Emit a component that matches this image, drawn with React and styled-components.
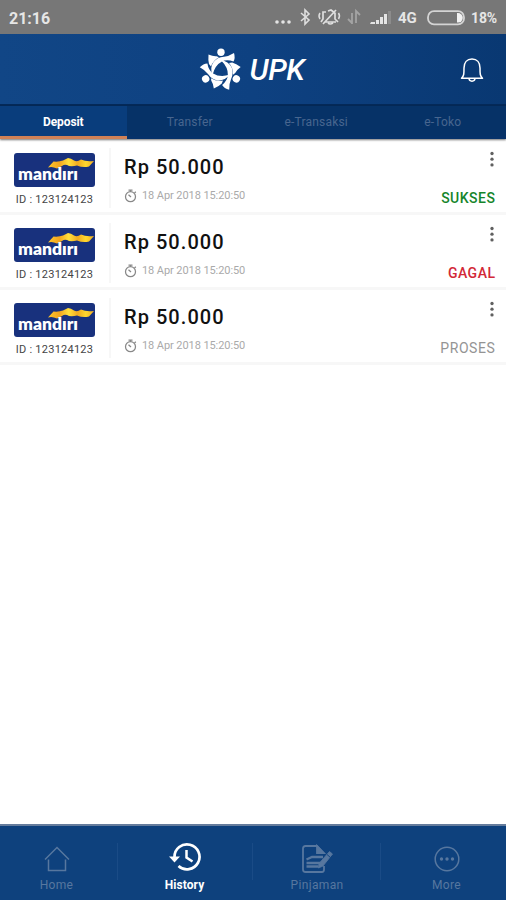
import React, { useState } from 'react'
import styled, { createGlobalStyle } from 'styled-components'

const GlobalStyle = createGlobalStyle`
  * {
    box-sizing: border-box;
  }

  body {
    margin: 0;
    background: #fff;
    font-family: Roboto, 'Liberation Sans', sans-serif;
  }

  svg {
    display: block;
    flex-shrink: 0;
  }
`

const Screen = styled.div`
  width: 506px;
  height: 900px;
  display: flex;
  flex-direction: column;
  overflow: hidden;
  background: #fff;
`

const StatusBar = styled.div`
  height: 34px;
  flex-shrink: 0;
  display: flex;
  align-items: center;
  justify-content: space-between;
  padding: 2px 8px 0 9px;
  background: #777;
  color: #e6e6e6;
  font-size: 16px;
  font-weight: 700;
`

const Clock = styled.span`
  letter-spacing: 0;
`

const StatusIcons = styled.div`
  display: flex;
  align-items: center;
`

const Network = styled.span`
  width: 21px;
  margin: 0 8px 0 3px;
  font-size: 15px;
`

const Percent = styled.span`
  width: 27px;
  margin-left: 6px;
  font-size: 14px;
  letter-spacing: -0.1px;
  white-space: nowrap;
`

const Header = styled.header`
  height: 72px;
  flex-shrink: 0;
  display: grid;
  grid-template-columns: 1fr auto 1fr;
  align-items: center;
  padding: 1px 22px 0;
  background: linear-gradient(90deg, #114686 0%, #0e4181 50%, #093872 100%);
  border-bottom: 2px solid #052a59;
`

const Brand = styled.div`
  grid-column: 2;
  display: flex;
  align-items: center;
  gap: 7px;
`

const BrandName = styled.h1`
  width: 58px;
  margin: 0;
  color: #fff;
  font-size: 30px;
  font-style: italic;
  font-weight: 500;
  line-height: 34px;
  letter-spacing: -0.4px;
`

const BellButton = styled.button`
  justify-self: end;
  padding: 0;
  border: none;
  background: none;
  cursor: pointer;
`

const Tabs = styled.div`
  height: 33px;
  flex-shrink: 0;
  display: flex;
  background: #063267;
  box-shadow: 0 1px 2px rgba(0, 0, 0, 0.55);
  z-index: 1;
`

const Tab = styled.button`
  flex: 1;
  padding: 2px 0 0;
  border: none;
  border-bottom: 3px solid ${({ $active }) => ($active ? '#d08156' : '#06326a')};
  background: ${({ $active }) => ($active ? '#093d7c' : 'transparent')};
  color: ${({ $active }) => ($active ? '#fff' : '#48668f')};
  font-family: inherit;
  font-size: 12px;
  font-weight: ${({ $active }) => ($active ? 700 : 400)};
  letter-spacing: ${({ $active }) => ($active ? '-0.1px' : '0.2px')};
  cursor: pointer;
`

const List = styled.main`
  flex: 1;
  padding-top: 1px;
`

const Row = styled.article`
  height: 75px;
  display: flex;
  padding: 0 11px 0 14px;
  border-bottom: 3px solid #f7f7f7;
`

const BankColumn = styled.div`
  width: 97px;
  margin: 8px 0 4px;
  border-right: 2px solid #f7f7f7;
`

const AccountId = styled.div`
  width: 81px;
  margin-top: 6px;
  color: #444;
  font-size: 11px;
  line-height: 14px;
  letter-spacing: 0.25px;
  text-align: center;
  white-space: nowrap;
`

const BankCard = styled.div`
  padding-top: 5px;
`

const Details = styled.div`
  flex: 1;
  padding: 13px 0 0 13px;
`

const Amount = styled.div`
  color: #111;
  font-size: 20px;
  font-weight: 500;
  line-height: 28px;
  letter-spacing: 1.05px;
`

const Timestamp = styled.div`
  display: flex;
  align-items: center;
  gap: 5px;
  margin-top: 7px;
  color: #aaa;
  font-size: 11px;
  line-height: 15px;
  letter-spacing: -0.08px;
`

const RowEnd = styled.div`
  display: flex;
  flex-direction: column;
  justify-content: space-between;
  align-items: flex-end;
  padding: 11px 0 6px;
`

const MenuButton = styled.button`
  padding: 0;
  border: none;
  background: none;
  cursor: pointer;
`

const Status = styled.span`
  color: ${({ $color }) => $color};
  font-size: 14px;
  font-weight: ${({ $pending }) => ($pending ? 400 : 500)};
  line-height: 15px;
  letter-spacing: ${({ $pending }) => ($pending ? '0.6px' : '0.5px')};
  margin-right: -0.5px;
`

const BottomNav = styled.nav`
  height: 76px;
  flex-shrink: 0;
  display: grid;
  grid-template-columns: 118px 135px 128px 125px;
  border-top: 2px solid #657c9c;
  background: #0e417d;
`

const NavItem = styled.button`
  display: flex;
  flex-direction: column;
  align-items: center;
  padding: ${({ $active }) => ($active ? '13px 0 0' : '14px 0 0')};
  padding-right: ${({ $shift }) => $shift || 0}px;
  border: none;
  background: linear-gradient(#1a4b86, #1a4b86) right 17px / 1px 37px no-repeat;
  color: ${({ $active }) => ($active ? '#fff' : '#57779f')};
  font-family: inherit;
  font-size: 12px;
  font-weight: ${({ $active }) => ($active ? 700 : 400)};
  letter-spacing: ${({ $active }) => ($active ? '0.1px' : '0.35px')};
  cursor: pointer;

  &:last-child {
    background: none;
    padding-left: 6px;
  }
`

const NavIcon = styled.span`
  height: ${({ $active }) => ($active ? 36 : 37)}px;
  display: flex;
  align-items: center;
`

const Label = styled.span`
  margin-top: ${({ $active }) => ($active ? 3 : 1)}px;
  line-height: 15px;
`

const SystemIcons = () => (
  <svg width="121" height="24" viewBox="0 0 121 24" fill="none" stroke="#dedede">
    <g fill="#e4e4e4" stroke="none">
      <circle cx="3" cy="16" r="1.8" />
      <circle cx="9" cy="16" r="1.8" />
      <circle cx="15" cy="16" r="1.8" />
    </g>
    <path d="M27 7 35 14 31 18V4L35 8 27 15" strokeWidth="1.6" />
    <path d="M52 6h-3v7l-2 3M54 5l3-1 4 3v6l3 3M51 16h11M54 17q2 2 5 0M49 18 62 4" strokeWidth="1.7" />
    <path d="M46 7q-2 3 0 6M64.500 7q2 3 0 6" strokeWidth="1.500" />
    <g stroke="#a4a4a4" strokeWidth="1.8">
      <path d="M78 18V7M78 17l-4-4M82 17V5l4 4" />
    </g>
    <g fill="#e4e4e4" stroke="none">
      <path d="M97 16h4v2h-5zM102 14h3v4h-3zM106 11h3v7h-3zM110 8h3v10h-3z" />
      <path d="M114 5h3v13h-3z" fill="#8c8c8c" />
    </g>
  </svg>
)

const Battery = () => (
  <svg width="38" height="16" viewBox="0 0 38 16">
    <rect x="1" y="1.2" width="36" height="13.2" rx="6" fill="#777" stroke="#d4d4d4" strokeWidth="1.8" />
    <path d="M30 3h1a4.8 4.8 0 0 1 0 9.6h-1z" fill="#f2f2f2" />
  </svg>
)

const BrandMark = () => (
  <svg width="44" height="44" viewBox="-22 -22 44 44" fill="#fff">
    {[0, 120, 240].map((angle) => (
      <g key={angle} transform={`rotate(${angle})`}>
        <circle cx="0" cy="-17.7" r="3.7" />
        <path d="M-12.500-15.500Q-8-13.500-4.500-13.800L-2-12.800Q-8-9.500-10-3.500L-12-6Q-13-10-12.500-15.500Z" />
        <path d="M13-17Q14.500-12 12.500-8.500 6-11 1-8.500-6-5-8.500 5-11.500-2-7.500-8-4-12.700 3-13.300 8-13.800 13-17Z" />
      </g>
    ))}
  </svg>
)

const Bell = () => (
  <svg width="24" height="26" viewBox="0 0 24 26" fill="none" stroke="#fff" strokeWidth="1.5" strokeLinejoin="round">
    <path d="M1.5 21.2C4 19 4 17 4 11c0-5.5 3-9 8-9s8 3.5 8 9c0 6 0 8 2.5 10.200Z" />
    <path d="M9 21.5c.3 3.5 5.700 3.5 6 0" />
  </svg>
)

const BankLogo = () => (
  <svg width="81" height="34" viewBox="0 0 81 34">
    <defs>
      <linearGradient id="ribbon" x1="0" x2="1">
        <stop offset="0" stopColor="#ffc72c" />
        <stop offset="0.25" stopColor="#f3a51d" />
        <stop offset="0.45" stopColor="#ffe03c" />
        <stop offset="0.65" stopColor="#f0aa20" />
        <stop offset="0.82" stopColor="#ffd72e" />
        <stop offset="1" stopColor="#f2ae22" />
      </linearGradient>
    </defs>
    <rect width="81" height="34" rx="3" fill="#18317d" />
    <path d="M34 14.500 39.500 8.500Q45 9 49 7.500L54 5Q57 5 60 7.500 63 9.500 67 6.500 72 9 80 8L75 13.500Q69 15 63 12.500 59 13.500 55 13 51 10.500 48 13L43 15.500Q38 13 34 14.500Z" fill="url(#ribbon)" />
    <text
      x="4"
      y="27"
      fill="#fff"
      fontFamily="Lato, sans-serif"
      fontSize="17"
      fontWeight="800"
      textLength="60"
      lengthAdjust="spacingAndGlyphs"
    >
      mandırı
    </text>
  </svg>
)

const Stopwatch = () => (
  <svg width="13" height="14" viewBox="0 0 13 14" fill="none" stroke="#888" strokeWidth="1.25">
    <circle cx="6.5" cy="7.7" r="5" />
    <path d="M4.5 1h4M6.5 1v2M10.5 4l1.300-1.300M4.5 5.700 7 8" />
  </svg>
)

const Dots = () => (
  <svg width="6" height="16" viewBox="0 0 6 16" fill="#606060">
    <circle cx="3" cy="2.5" r="1.65" />
    <circle cx="3" cy="8.2" r="1.65" />
    <circle cx="3" cy="13.9" r="1.65" />
  </svg>
)

const HomeIcon = () => (
  <svg width="26" height="26" viewBox="0 0 26 26" fill="none" stroke="currentColor" strokeWidth="1.5">
    <path d="M1 13.5 13 1.5l12 12M4.5 13.5v11h17v-11" />
  </svg>
)

const HistoryIcon = () => (
  <svg width="34" height="30" viewBox="0 0 34 30" fill="none" stroke="currentColor" strokeWidth="2.7">
    <path d="M6.5 15A12.5 12.5 0 1 1 10.5 24" />
    <path d="M1 14.5h11l-5.5 6z" fill="currentColor" stroke="none" />
    <path d="M18.5 8v7.5l6 4" strokeWidth="2.5" />
  </svg>
)

const LoanIcon = () => (
  <svg width="32" height="30" viewBox="0 0 32 30" fill="none" stroke="currentColor" strokeWidth="1.8">
    <path d="M23 9.5 16 2H4.5Q2 2 2 4.5v21Q2 28 4.5 28H21q2 0 2-2.5V22" />
    <path d="M16 2v7h7z" fill="currentColor" />
    <path d="M5.5 15.5 11 13h11M5.5 19h14M5.5 22.5h12" strokeWidth="2.3" />
    <path d="m28.5 7.5 3 2.5L22 22l-4.5 2 .5-4.5z" fill="currentColor" strokeWidth="0.8" />
    <path d="m26 10.5 3.5 3" stroke="#0e417d" strokeWidth="0.9" />
  </svg>
)

const MoreIcon = () => (
  <svg width="26" height="26" viewBox="0 0 26 26" fill="currentColor">
    <circle cx="13" cy="13" r="11.8" fill="none" stroke="currentColor" strokeWidth="1.5" />
    <circle cx="7.5" cy="13" r="1.7" />
    <circle cx="13" cy="13" r="1.7" />
    <circle cx="18.5" cy="13" r="1.7" />
  </svg>
)

const tabs = ['Deposit', 'Transfer', 'e-Transaksi', 'e-Toko']

const transactions = [
  { status: 'SUKSES', color: '#16852b' },
  { status: 'GAGAL', color: '#d22837' },
  { status: 'PROSES', color: '#949494' },
]

const navItems = [
  { label: 'Home', icon: <HomeIcon />, shift: 5 },
  { label: 'History', icon: <HistoryIcon />, shift: 2 },
  { label: 'Pinjaman', icon: <LoanIcon /> },
  { label: 'More', icon: <MoreIcon /> },
]

const App = () => {
  const [activeTab, setActiveTab] = useState('Deposit')
  const [activePage, setActivePage] = useState('History')

  return (
    <>
      <GlobalStyle />
      <Screen>
        <StatusBar>
          <Clock>21:16</Clock>
          <StatusIcons>
            <SystemIcons />
            <Network>4G</Network>
            <Battery />
            <Percent>18%</Percent>
          </StatusIcons>
        </StatusBar>
        <Header>
          <Brand>
            <BrandMark />
            <BrandName>UPK</BrandName>
          </Brand>
          <BellButton aria-label="Notifications">
            <Bell />
          </BellButton>
        </Header>
        <Tabs>
          {tabs.map((tab) => (
            <Tab key={tab} $active={activeTab === tab} onClick={() => setActiveTab(tab)}>
              {tab}
            </Tab>
          ))}
        </Tabs>
        <List>
          {transactions.map(({ status, color }) => (
            <Row key={status}>
              <BankColumn>
                <BankCard>
                  <BankLogo />
                </BankCard>
                <AccountId>ID : 123124123</AccountId>
              </BankColumn>
              <Details>
                <Amount>Rp 50.000</Amount>
                <Timestamp>
                  <Stopwatch />
                  18 Apr 2018 15:20:50
                </Timestamp>
              </Details>
              <RowEnd>
                <MenuButton aria-label="Options">
                  <Dots />
                </MenuButton>
                <Status $color={color} $pending={status === 'PROSES'}>
                  {status}
                </Status>
              </RowEnd>
            </Row>
          ))}
        </List>
        <BottomNav>
          {navItems.map(({ label, icon, shift }) => (
            <NavItem
              key={label}
              $active={activePage === label}
              $shift={shift}
              onClick={() => setActivePage(label)}
            >
              <NavIcon $active={activePage === label}>{icon}</NavIcon>
              <Label $active={activePage === label}>{label}</Label>
            </NavItem>
          ))}
        </BottomNav>
      </Screen>
    </>
  )
}

export default App
